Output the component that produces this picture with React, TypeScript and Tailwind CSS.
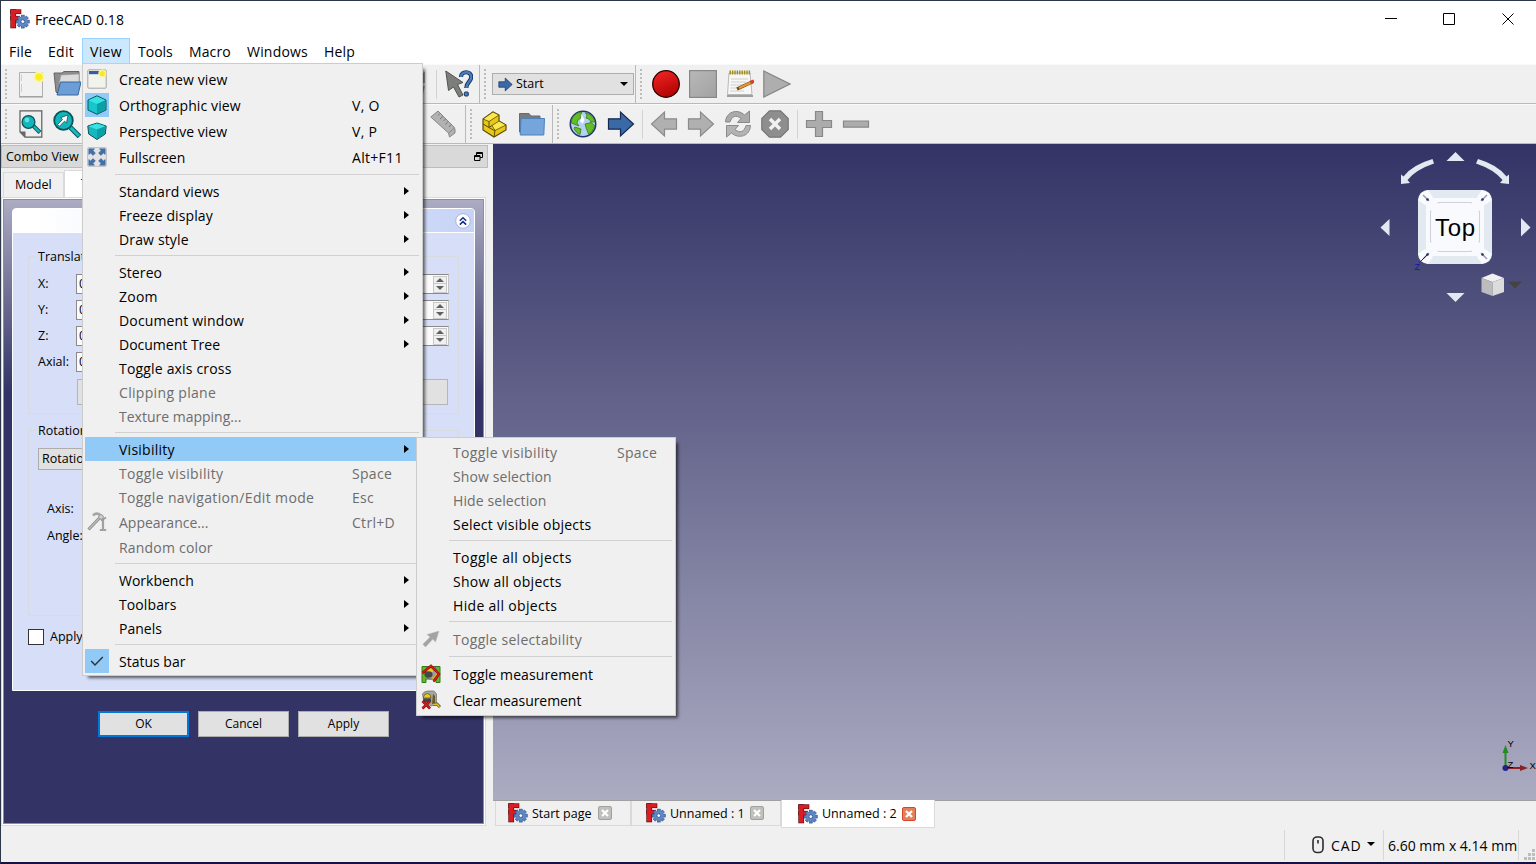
import React from "react";

type P = { className?: string; children?: React.ReactNode };

const ICON = "block shrink-0";

function Svg({ className = "", box = "0 0 28 28", children }: P & { box?: string }) {
  return (
    <svg viewBox={box} className={`${ICON} ${className}`} fill="none">
      {children}
    </svg>
  );
}

function Gear({ cx, cy, s }: { cx: number; cy: number; s: number }) {
  return (
    <g transform={`translate(${cx} ${cy}) scale(${s})`}>
      {[0, 45, 90, 135].map((a) => (
        <rect key={a} x="-1.5" y="-6.6" width="3" height="13.2" fill="#5680c0" stroke="#2c4c84" strokeWidth=".6" transform={`rotate(${a})`} />
      ))}
      <circle r="4.7" fill="#5f88c6" />
      <circle r="1.9" fill="#fff" stroke="#2c4c84" strokeWidth=".8" />
    </g>
  );
}

function Logo({ className = "" }: P) {
  return (
    <Svg box="0 0 20 20" className={`h-5 w-5 ${className}`}>
      <g stroke="#6d0c0f" strokeWidth="1.4">
        <rect x="1" y="1" width="4.4" height="17.6" />
        <rect x="1" y="1" width="9.6" height="3.4" />
        <rect x="1" y="7.6" width="8" height="3.2" />
      </g>
      <g fill="#d81d24">
        <rect x="1" y="1" width="4.4" height="17.6" />
        <rect x="1" y="1" width="9.6" height="3.4" />
        <rect x="1" y="7.6" width="8" height="3.2" />
      </g>
      <Gear cx={12.8} cy={12.6} s={0.98} />
    </Svg>
  );
}

function Handle({ className = "" }: P) {
  return (
    <div className={`flex h-[31px] w-[3px] shrink-0 flex-col justify-between ${className}`}>
      {Array.from({ length: 8 }, (_, i) => (
        <i key={i} className="block h-[2px] w-[2px] bg-[#bdbdbd]" />
      ))}
    </div>
  );
}

const Edge = ({ className = "" }: P) => <div className={`h-full w-px shrink-0 bg-[#b9b9b9] ${className}`} />;
const Split = ({ className = "" }: P) => <div className={`h-[29px] w-px shrink-0 bg-[#d2d2d2] ${className}`} />;

const BigArrow = ({ className = "h-7 w-7", left = false, fill = "#3a69a8", stroke = "#14294b" }: P & { left?: boolean; fill?: string; stroke?: string }) => (
  <Svg className={className}>
    <path transform={left ? "matrix(-1 0 0 1 28 0)" : undefined} d="M1.5 8.8H13.5V2L26.5 14L13.5 26V19.2H1.5Z" fill={fill} stroke={stroke} strokeWidth="1.2" />
  </Svg>
);

function Cube({ flat = false }: { flat?: boolean }) {
  return flat ? (
    <Svg box="0 0 20 20" className="h-5 w-5">
      <path d="M.8 5L10 2L19.2 5L18.3 13L10 18.5L1.7 13Z" fill="#16b8bd" stroke="#0b5558" />
      <path d="M1.3 5.2L10 2.4L18.7 5.2L10 8.5Z" fill="#35e2e4" />
      <path d="M10 8.5L18.7 5.2L17.9 12.8L10 18Z" fill="#0c9fa6" />
    </Svg>
  ) : (
    <Svg box="0 0 20 20" className="h-5 w-5">
      <path d="M1 5L10 .8L19 5V15L10 19.3L1 15Z" fill="#18c5ca" stroke="#0b5558" />
      <path d="M1.6 5.3L10 1.4L18.4 5.3L10 9Z" fill="#35e2e4" />
      <path d="M10 9L18.4 5.3V14.7L10 18.6Z" fill="#0c9fa6" />
    </Svg>
  );
}

const NewView = () => (
  <Svg box="0 0 20 20" className="h-5 w-5">
    <rect x=".8" y=".8" width="18.4" height="18.4" rx="1" fill="#f3f3ee" stroke="#a5a5a0" />
    <rect x="2" y="2" width="14" height="3.2" fill="#315f9f" />
    <circle cx="15.3" cy="4.5" r="4" fill="#f8f2a5" />
    <circle cx="15.3" cy="4.5" r="2.6" fill="#f8ea1d" />
  </Svg>
);

const FullIcon = () => (
  <Svg box="0 0 20 20" className="h-5 w-5">
    <rect x=".5" y=".5" width="19" height="19" rx="1.5" fill="#e3e3e3" stroke="#c4c4c4" />
    {[0, 90, 180, 270].map((a) => (
      <path key={a} transform={`rotate(${a} 10 10)`} d="M1.8 1.8H7.5L5.9 3.6L8.4 6L6 8.4L3.6 5.9L1.8 7.5Z" fill="#4272ae" stroke="#335a8e" strokeWidth=".5" />
    ))}
  </Svg>
);

const Hammer = () => (
  <Svg box="0 0 20 20" className="h-5 w-5">
    <path d="M1.5 17.5L13 5.5" stroke="#8e8e8e" strokeWidth="3.2" />
    <path d="M2 17L13 5.5" stroke="#bababa" strokeWidth="1.4" />
    <path d="M6 3.5Q9 .5 12.5 2.5L16 5.5" stroke="#a6a6a6" strokeWidth="2.6" />
    <path d="M16 7V17" stroke="#a2a2a2" strokeWidth="2.2" />
    <path d="M12.8 18H19.2" stroke="#999" strokeWidth="1.8" />
    <path d="M14 8.5L19 5.5" stroke="#999" strokeWidth="1.6" />
    <circle cx="14" cy="5" r="2.3" fill="#d0d0d0" stroke="#999" />
  </Svg>
);

const SelectIcon = () => (
  <Svg box="0 0 20 20" className="h-5 w-5">
    <path d="M18 2L14.6 13L11.8 10.3L4.5 18L1.8 15.2L9 8L6 5.5Z" fill="#a3a3a3" stroke="#bcbcbc" strokeWidth=".5" />
  </Svg>
);

const ToggleMeasure = () => (
  <Svg box="0 0 20 20" className="h-5 w-5">
    <path d="M1 18.500V2.500H19V18.500H15V15H5V18.500Z" fill="#65b62e" stroke="#357a18" />
    <path d="M6 3L14 3L16 6V15L8 15L4 11Z" fill="#9c9c98" stroke="#5f5f5f" strokeWidth=".8" />
    <path d="M6 6Q9 2.500 12 6V8H6Z" fill="#e8cb22" />
    <ellipse cx="7.500" cy="10.500" rx="4" ry="3.300" fill="#454846" />
    <path d="M15 7V12L11 15" stroke="#d0b32a" strokeWidth="2" />
    <path d="M1.500 9L10 1.800L18 10L12.500 17.500" stroke="#6c0808" strokeWidth="2.4" />
    <path d="M1.500 9L10 1.800L18 10L12.500 17.500" stroke="#e11b1b" strokeWidth="1.5" />
  </Svg>
);

const ClearMeasure = () => (
  <Svg box="0 0 20 20" className="h-5 w-5">
    <path d="M1.500 4Q3 1 7 1H13L15.500 4V14L10 16L3 12Z" fill="#a5a5a2" stroke="#777" strokeWidth=".8" />
    <path d="M12 4L14 6V13L11 14Z" fill="#6b5a1c" />
    <path d="M2.500 7Q3 3.500 6.500 3.500Q10 3.800 10 8H2.500Z" fill="#e8cb22" stroke="#544e10" strokeWidth=".7" />
    <path d="M2 8.500H10V12H3Z" fill="#454846" />
    <path d="M12 14.500L16 14L19 17" stroke="#55501a" strokeWidth="3" />
    <path d="M12 14.500L16 14L18.500 16.700" stroke="#dcc12c" strokeWidth="1.6" />
    <path d="M1.500 11L9 18.500M9 11L1.500 18.500" stroke="#7d0808" strokeWidth="2.600" />
    <path d="M1.500 11L9 18.500M9 11L1.500 18.500" stroke="#dd1717" strokeWidth="1.700" />
  </Svg>
);

const Check = () => (
  <Svg box="0 0 20 20" className="h-5 w-5">
    <path d="M4.2 10L8 14L15.8 6" stroke="#28323a" strokeWidth="1.4" />
  </Svg>
);

type Item = {
  t?: string;
  k?: string;
  sub?: boolean;
  off?: boolean;
  tall?: boolean;
  hot?: boolean;
  on?: boolean;
  icon?: React.ReactNode;
  tr?: string;
};

function Menu({ items, className, keyPos }: { items: Item[]; className: string; keyPos: string }) {
  return (
    <div className={`absolute border border-[#cccccc] bg-[#f0f0f0] px-[2px] py-[2px] shadow-[4px_4px_3px_-2px_rgba(0,0,0,0.6)] ${className}`}>
      {items.map((m, i) =>
        m.t ? (
          <div
            key={i}
            className={`relative flex items-center ${m.tall ? "h-[26px]" : "h-6"} ${m.hot ? "bg-[#91c9f7]" : ""} ${m.off ? "text-[#6d6d6d]" : "text-black"}`}
          >
            <div className={`flex h-6 w-6 shrink-0 items-center justify-center ${m.on ? "bg-[#91c9f7]" : ""}`}>{m.icon}</div>
            <span className={`ml-[10px] pt-px whitespace-nowrap ${m.tr ?? "tracking-[0.1px]"}`}>{m.t}</span>
            {m.k && <span className={`absolute top-1/2 -translate-y-1/2 pt-px tracking-[0.3px] whitespace-nowrap ${keyPos}`}>{m.k}</span>}
            {m.sub && (
              <svg viewBox="0 0 5 8" className="mr-[11px] mb-px ml-auto h-2 w-[5px]">
                <path d="M0 0L5 4L0 8Z" fill="#000" />
              </svg>
            )}
          </div>
        ) : (
          <div key={i} className="flex h-[9px] items-center">
            <div className="mr-px ml-[30px] h-px grow bg-[#d0d0d0]" />
          </div>
        ),
      )}
    </div>
  );
}

const viewItems: Item[] = [
  { t: "Create new view", tall: true, icon: <NewView /> },
  { t: "Orthographic view", k: "V, O", tall: true, on: true, icon: <Cube /> },
  { t: "Perspective view", k: "V, P", tall: true, icon: <Cube flat />, tr: "tracking-normal" },
  { t: "Fullscreen", k: "Alt+F11", tall: true, icon: <FullIcon />, tr: "tracking-normal" },
  {},
  { t: "Standard views", sub: true },
  { t: "Freeze display", sub: true },
  { t: "Draw style", sub: true, tr: "tracking-[0.15px]" },
  {},
  { t: "Stereo", sub: true },
  { t: "Zoom", sub: true, tr: "tracking-[0.25px]" },
  { t: "Document window", sub: true, tr: "tracking-[0.15px]" },
  { t: "Document Tree", sub: true, tr: "tracking-normal" },
  { t: "Toggle axis cross", tr: "tracking-[0.18px]" },
  { t: "Clipping plane", off: true, tr: "tracking-[0.32px]" },
  { t: "Texture mapping...", off: true, tr: "tracking-normal" },
  {},
  { t: "Visibility", sub: true, hot: true, tr: "tracking-[0.25px]" },
  { t: "Toggle visibility", k: "Space", off: true, tr: "tracking-[0.36px]" },
  { t: "Toggle navigation/Edit mode", k: "Esc", off: true, tr: "tracking-[0.36px]" },
  { t: "Appearance...", k: "Ctrl+D", off: true, tall: true, icon: <Hammer />, tr: "tracking-normal" },
  { t: "Random color", off: true, tr: "tracking-[0.2px]" },
  {},
  { t: "Workbench", sub: true, tr: "tracking-normal" },
  { t: "Toolbars", sub: true },
  { t: "Panels", sub: true, tr: "tracking-normal" },
  {},
  { t: "Status bar", on: true, icon: <Check />, tr: "tracking-normal" },
];

const visibilityItems: Item[] = [
  { t: "Toggle visibility", k: "Space", off: true, tr: "tracking-[0.36px]" },
  { t: "Show selection", off: true },
  { t: "Hide selection", off: true },
  { t: "Select visible objects", tr: "tracking-[0.23px]" },
  {},
  { t: "Toggle all objects", tr: "tracking-[0.4px]" },
  { t: "Show all objects", tr: "tracking-[0.27px]" },
  { t: "Hide all objects", tr: "tracking-[0.32px]" },
  {},
  { t: "Toggle selectability", off: true, tall: true, icon: <SelectIcon />, tr: "tracking-[0.3px]" },
  {},
  { t: "Toggle measurement", tall: true, icon: <ToggleMeasure /> },
  { t: "Clear measurement", tall: true, icon: <ClearMeasure />, tr: "tracking-[-0.05px]" },
];

function FileToolbar() {
  return (
    <div className="flex h-10 items-center border-t border-b border-t-[#fafafa] border-b-[#b9b9b9]">
      <Handle className="ml-[4px]" />
      <Svg className="ml-[9px] h-7 w-7">
        <path d="M2.5 2.500H25.500V26.500H2.500Z" fill="#f1f1f1" stroke="#b0b0b0" />
        <path d="M2 27H26" stroke="#999" />
        <path d="M4.500 4.500V11M4.500 14V22" stroke="#ccc" />
        <circle cx="22" cy="7" r="5.700" fill="#faf6b0" />
        <circle cx="22" cy="7" r="3.800" fill="#faee22" />
      </Svg>
      <Svg className="ml-[8px] h-7 w-7">
        <path d="M1 3H9L11 1.5H26V14L6 25L3 22Z" fill="#8d8d8d" stroke="#666" />
        <path d="M6 14L8 5L26 4V14Z" fill="#dcdcdc" stroke="#999" strokeWidth=".6" />
        <path d="M7.500 12H28L25 25H4Z" fill="#6b9dd6" stroke="#38669f" />
      </Svg>
      <div className="ml-[339px] flex h-7 w-[8px] items-center">
        <Svg box="0 0 8 28" className="h-7 w-2">
          <path d="M0 4L5 2V13H0M0 16H5L3 24L0 26" fill="#a2a2a2" />
        </Svg>
      </div>
      <Split className="ml-[8px]" />
      <Svg className="ml-[8px] h-7 w-7">
        <path d="M.8 1L18 12.500L12.500 14.500L18 25L14 27L8.500 17L3.500 20.500Z" fill="#7b7e7a" stroke="#50544f" />
        <path d="M16 7C16 .8 26.200 .5 26.200 7C26.200 12 21.500 11.500 21.300 18" stroke="#17345e" strokeWidth="4.2" />
        <path d="M16 7C16 .8 26.200 .5 26.200 7C26.200 12 21.500 11.500 21.300 18" stroke="#477cbf" strokeWidth="2.4" />
        <rect x="19.300" y="22" width="4" height="4" rx="1" fill="#477cbf" stroke="#17345e" />
      </Svg>
      <Edge className="ml-[6px]" />
      <Handle className="ml-[4px]" />
      <div className="ml-[5px] flex h-[22px] w-[142px] shrink-0 items-center border border-[#adadad] bg-[#e1e1e1] text-[12.5px]">
        <BigArrow className="ml-[5px] h-[15px] w-[15px]" />
        <span className="ml-[3px]">Start</span>
        <svg viewBox="0 0 8 4" className="mr-[5px] ml-auto h-1 w-2">
          <path d="M0 0H8L4 4Z" fill="#000" />
        </svg>
      </div>
      <Edge className="ml-px" />
      <Handle className="ml-[4px]" />
      <Svg className="ml-[9px] h-7 w-7">
        <circle cx="14" cy="14" r="13.3" fill="url(#rec)" stroke="#260000" strokeWidth="1.3" />
        <defs>
          <linearGradient id="rec" x1="0" y1="0" x2=".4" y2="1">
            <stop stopColor="#f52727" />
            <stop offset="1" stopColor="#b50404" />
          </linearGradient>
          <linearGradient id="gr" x1="0" y1="0" x2="1" y2="1">
            <stop stopColor="#b8b8b8" />
            <stop offset="1" stopColor="#a2a2a2" />
          </linearGradient>
        </defs>
      </Svg>
      <Svg className="ml-[9px] h-7 w-7">
        <rect x=".6" y=".6" width="26.8" height="26.8" fill="url(#gr)" stroke="#888" strokeWidth="1.2" />
      </Svg>
      <Svg className="ml-[9px] h-7 w-7">
        <path d="M3 3H24L26 24.5H1.5Z" fill="#f7f7f7" stroke="#aaa" strokeWidth=".8" />
        <path d="M1 26H27" stroke="#8b8b8b" strokeWidth="1.6" />
        <path d="M5 9H22M5 12H20M4.5 15H17M4.5 18H12M4 21H18" stroke="#cfcfcf" />
        <path d="M3.5 2.5H24.5" stroke="#9d8a16" strokeWidth="4" strokeDasharray="1.4 1" />
        <path d="M11 19L26 12" stroke="#7a4b10" strokeWidth="3.4" />
        <path d="M13 18L25 12.500" stroke="#e39a37" strokeWidth="2.2" />
        <path d="M24.500 12.700L28 11" stroke="#e23a2b" strokeWidth="3.6" />
      </Svg>
      <Svg className="ml-[9px] h-7 w-7">
        <path d="M.8 1L27 14L.8 27Z" fill="#aeaeae" stroke="#858585" strokeWidth="1.2" />
      </Svg>
    </div>
  );
}

function NavToolbar() {
  return (
    <div className="flex h-10 items-center border-t border-b border-t-[#fafafa] border-b-[#b9b9b9]">
      <Handle className="ml-[4px]" />
      <Svg className="ml-[9px] h-7 w-7">
        <path d="M3 .8H24.8V27.2H8L3 22Z" fill="#eee" stroke="#5a5f5a" strokeWidth="1.2" />
        <path d="M3 21.5H8.5V27.5Z" fill="#666" />
        <path d="M16.500 16L23 22.500" stroke="#0b5557" strokeWidth="4" />
        <path d="M16.500 16L22.500 22" stroke="#18bcc0" strokeWidth="2.2" />
        <circle cx="11.500" cy="12" r="6.4" fill="#12b5ba" stroke="#0a5357" strokeWidth="1.3" />
        <circle cx="10" cy="10" r="2.4" fill="#5be2e4" />
      </Svg>
      <Svg className="ml-[8px] h-7 w-7">
        <path d="M17 17L26.500 26.500" stroke="#0b5557" strokeWidth="5" />
        <path d="M17 17L26 26" stroke="#18bcc0" strokeWidth="3" />
        <circle cx="10.500" cy="10.500" r="9.300" fill="#12b5ba" stroke="#0a5357" strokeWidth="1.800" />
        <path d="M4.500 14.500L9.500 9.500L7.700 7.700L15 5L13.500 13L11.500 11.200L6.500 16.200Z" fill="#fff" stroke="#234" strokeWidth=".7" />
      </Svg>
      <Svg className="ml-[349px] h-7 w-7">
        <path d="M.8 7L8 1L24 17Q25.500 19 25 23L19.500 27L18.500 23Z" fill="#b2b2b2" stroke="#888" />
        <path d="M18.500 23L24.500 18" stroke="#888" />
        <path d="M10 3.500L8 5.500M13 6.500L10 9M15.500 9L13.500 11M18 11.500L15.500 14.500M21 14.500L19 17" stroke="#777" />
      </Svg>
      <Edge className="ml-[7px]" />
      <Handle className="ml-[4px]" />
      <Svg className="ml-[8px] h-7 w-7">
        <path d="M2 9L12 2L18 5V11L25 15V20L13 27L2 20Z" fill="#e9c717" stroke="#5b4c05" strokeWidth="1.2" />
        <path d="M2 9L12 2L18 5L8 11.5ZM11 15.5L18 11L25 15L14 20.5Z" fill="#fbe851" stroke="#5b4c05" strokeWidth=".8" />
        <path d="M8 11.5V17.5M2 14L8 17.5L11 15.5M14 20.5L13 27M8 17.5L14 21" stroke="#5b4c05" />
      </Svg>
      <Svg className="ml-[9px] h-7 w-7">
        <path d="M1.5 22V3.500H11L13 6H22V22Z" fill="#7b7b7b" stroke="#6a6a6a" />
        <path d="M3 8.500H26.500L25.800 25H2.200Z" fill="#76a5dc" stroke="#4d80bd" />
      </Svg>
      <Edge className="ml-[6px]" />
      <Handle className="ml-[4px]" />
      <Svg className="ml-[9px] h-7 w-7">
        <circle cx="14" cy="14" r="12.7" fill="#b5d0f0" stroke="#1f356b" strokeWidth="1.6" />
        <path d="M2.500 10C4.500 4.500 9 2 13 2.400L11 5.500L12 8L9 10L8 13L10 16L6 14.500L2.300 13Z" fill="#62be22" stroke="#2c7412" strokeWidth=".7" />
        <path d="M16 2.800C22 4 25 8 26 12L22 12L20 9L17 8L18 5ZM16 14L22 12.500L25.600 15.500C25 20 22 23 19.500 24L17.500 19ZM6 17L12 19L11 24.500C8 23.500 6 21 5 18Z" fill="#62be22" stroke="#2c7412" strokeWidth=".7" />
        <path d="M13 5L15.500 10L13.500 14L11 11Z" fill="#fff" />
      </Svg>
      <BigArrow className="ml-[10px] h-7 w-7" />
      <Split className="ml-[7px]" />
      <BigArrow className="ml-[7px] h-7 w-7" left fill="#b0b0b0" stroke="#8b8b8b" />
      <BigArrow className="ml-[9px] h-7 w-7" fill="#b0b0b0" stroke="#8b8b8b" />
      <Svg className="ml-[9px] h-7 w-7">
        <path d="M1.5 12C2 2 13-2 20.5 5L25.5 1V12.5H13.5L17 8.5C12 4.5 8 6 6 12Z" fill="#aaa" stroke="#888" />
        <path d="M26.5 15.5C26 26 15 29.5 7.5 23L2.5 27V15.5H14.5L11 19.5C16 23.5 20 22 22 15.5Z" fill="#b3b3b3" stroke="#8b8b8b" />
      </Svg>
      <Svg className="ml-[9px] h-7 w-7">
        <path d="M8.5.8H19.5L27.2 8.5V19.5L19.5 27.2H8.5L.8 19.5V8.5Z" fill="#8e8e8e" stroke="#777" strokeWidth="1.2" />
        <path d="M9 9L19 19M19 9L9 19" stroke="#f2f2f2" strokeWidth="3.4" />
      </Svg>
      <Split className="ml-[8px]" />
      <Svg className="ml-[7px] h-7 w-7">
        <path d="M10.5 1.5H17.5V10.5H26.5V17.5H17.5V26.5H10.5V17.5H1.5V10.5H10.5Z" fill="#acacac" stroke="#888" strokeWidth="1.2" />
      </Svg>
      <Svg className="ml-[9px] h-7 w-7">
        <path d="M1.5 11H26.5V17.2H1.5Z" fill="#acacac" stroke="#888" strokeWidth="1.2" />
      </Svg>
    </div>
  );
}

function Field({ label, spin = true }: { label: string; spin?: boolean }) {
  return (
    <div className="mb-[6px] flex h-5 items-center">
      <span className="w-[38px] shrink-0 whitespace-nowrap">{label}</span>
      <div className={`flex h-5 items-center justify-between border border-[#8a8a8a] border-r-[#c4c4c4] bg-[#fbfbfb] pl-[2px] ${spin ? "w-[373px]" : "w-[330px]"}`}>
        <span>0</span>
        {spin && (
          <div className="mr-px flex h-[17px] w-[14px] flex-col border border-[#c9c9c9] bg-[#f0f0f0]">
            <div className="flex h-1/2 items-center justify-center border-b border-[#c9c9c9]">
              <svg viewBox="0 0 8 4" className="h-1 w-2"><path d="M0 4H8L4 0Z" fill="#606060" /></svg>
            </div>
            <div className="flex h-1/2 items-center justify-center">
              <svg viewBox="0 0 8 4" className="h-1 w-2"><path d="M0 0H8L4 4Z" fill="#606060" /></svg>
            </div>
          </div>
        )}
      </div>
    </div>
  );
}

function ComboView() {
  return (
    <div className="flex h-[683px] w-[487px] shrink-0 flex-col pt-px text-[12.5px]">
      <div className="flex h-[23px] items-center justify-between border border-[#bcbcbc] bg-[#d9d9d9] pr-1 pl-[4px]">
        <span className="pt-[2px]">Combo View</span>
        <svg viewBox="0 0 9 9" className="h-[9px] w-[9px]" fill="none" stroke="#000">
          <path d="M2.5 3V.5H8.500V5.500H6M2.500 1.500H8.500M.5 3.500H6V8.500H.5ZM.5 4.500H6" />
        </svg>
      </div>
      <div className="flex h-[29px] items-end pl-[2px]">
        <div className="flex h-[25px] w-[61px] items-center border border-b-0 border-[#d9d9d9] bg-[#f0f0f0] pt-px pl-[11px]">Model</div>
        <div className="flex h-[27px] w-[60px] items-center border border-b-0 border-[#d9d9d9] bg-white pl-[16px]">Tasks</div>
      </div>
      <div className="h-[629px] w-[485px] border border-[#dadada] bg-white p-px">
        <div className="flex h-full w-[481px] flex-col items-center border border-[#8d8da0] bg-[linear-gradient(#ababc2_0px,#333366_192px)] pt-[8px]">
          <div className="h-[483px] w-[463px] shrink-0 overflow-hidden rounded-t-[4px] border border-white bg-[#d6dff7]">
            <div className="flex h-[24px] items-center justify-end border-b border-white bg-[linear-gradient(90deg,#ffffff_0%,#ffffff_5%,#c6d3f7_100%)] pr-[3px]">
              <svg viewBox="0 0 16 16" className="h-4 w-4" fill="none">
                <circle cx="8" cy="8" r="7.3" fill="#fff" stroke="#a9b4d4" />
                <path d="M4.800 7.800L8 4.800L11.200 7.800M4.800 11.600L8 8.600L11.200 11.600" stroke="#0b2f88" strokeWidth="1.5" />
              </svg>
            </div>
            <div className="px-[15px] pt-[15px]">
              <fieldset className="h-[166px] border border-[#d8dbdf] px-[9px]">
                <legend className="-ml-[2px] h-[17px] px-[2px] leading-[17px]">Translation:</legend>
                <div className="pt-[9px]">
                  <Field label="X:" />
                  <Field label="Y:" />
                  <Field label="Z:" />
                  <Field label="Axial:" spin={false} />
                  <div className="mt-[7px] ml-[39px] h-[26px] w-[371px] border border-[#b5b5b5] bg-[#e1e1e1]" />
                </div>
              </fieldset>
              <fieldset className="mt-[8px] h-[194px] border border-[#d8dbdf] px-[9px]">
                <legend className="-ml-[2px] h-[17px] px-[2px] leading-[17px]">Rotation:</legend>
                <div className="mt-[9px] flex h-[22px] w-[410px] items-center border border-[#adadad] bg-[#e1e1e1] pl-[3px]">Rotation</div>
                <div className="mt-[29px] ml-[9px] h-[20px] leading-[20px]">Axis:</div>
                <div className="mt-[7px] ml-[9px] h-[20px] leading-[20px]">Angle:</div>
              </fieldset>
              <div className="mt-[13px] flex items-center">
                <div className="h-4 w-4 border border-[#333] bg-white" />
                <span className="ml-[6px] leading-4">Apply</span>
              </div>
            </div>
          </div>
          <div className="mt-[20px] flex gap-[9px] text-[12px]">
            <button className="h-[26px] w-[91px] border-2 border-[#0078d7] bg-[#e1e1e1]">OK</button>
            <button className="h-[26px] w-[91px] border border-[#adadad] bg-[#e1e1e1]">Cancel</button>
            <button className="h-[26px] w-[91px] border border-[#adadad] bg-[#e1e1e1]">Apply</button>
          </div>
        </div>
      </div>
    </div>
  );
}

function Corner({ t }: { t: string }) {
  return (
    <g transform={t}>
      <path d="M-37 -27L-34 -34L-27 -37L-22 -30L-30 -22Z" fill="#fafbfd" />
      <path d="M-32 -32L-26 -26" stroke="#9da0b8" strokeWidth="1.6" />
      <circle cx="-27.500" cy="-27.500" r="1.3" fill="#303070" />
    </g>
  );
}

function Viewport() {
  return (
    <div className="flex h-[657px] shrink-0 flex-col items-end justify-between border-b border-[#a0a0a0] bg-[linear-gradient(#333366,#ababc2)]">
      <svg viewBox="1370 144 166 166" className="h-[166px] w-[166px] shrink-0" fill="none">
        <g fill="#e2e9f0">
          <path d="M1446.500 161L1455.500 152L1464.500 161Z" />
          <path d="M1446.500 293L1455.500 302L1464.500 293Z" />
          <path d="M1389.500 219V236L1380.500 227.500Z" />
          <path d="M1521 218V236.500L1530.500 227.500Z" />
          <path d="M1401 184V174.500L1403.500 176.500Q1412 165 1432.500 159L1434 163.500Q1416 169.500 1407.500 180L1410 183Z" />
          <path d="M1509 184V174.500L1506.500 176.500Q1498 165 1478 159L1476 163.500Q1494 169.500 1502.500 180L1500 183Z" />
        </g>
        <rect x="1418" y="190" width="74" height="74" rx="10" fill="#e2e9f0" />
        <rect x="1426" y="198" width="58" height="58" rx="5" fill="#f9fafd" />
        <Corner t="translate(1455 227)" />
        <Corner t="translate(1455 227) rotate(90)" />
        <Corner t="translate(1455 227) rotate(180)" />
        <Corner t="translate(1455 227) rotate(270)" />
        <path stroke="#cfd0dc" d="M1438 203.500V202.500H1471.500V203.500M1438 250.500V251.500H1471.500V250.500M1431.500 211H1430.500V242H1431.500M1478.500 211H1479.500V242H1478.500" />
        <path d="M1419 263L1428 254" stroke="#1a1ad0" />
        <text x="1435" y="236" fontSize="24" fontFamily="Liberation Sans, sans-serif" fill="#000" textLength="40">Top</text>
        <text x="1414.500" y="269.500" fontSize="9" fontFamily="Liberation Sans, sans-serif" fill="#1414b8">Z</text>
        <path d="M1481.500 278L1492.500 273.500L1504 278L1492.500 282Z" fill="#f1f1f1" />
        <path d="M1481.500 278L1492.500 282V296L1481.500 292Z" fill="#bcbcbc" />
        <path d="M1504 278L1492.500 282V296L1504 292Z" fill="#dcdcdc" />
        <path d="M1508 281.500H1522L1515 288.500Z" fill="#444" />
      </svg>
      <svg viewBox="1496 730 40 50" className="mb-5 h-[50px] w-10 shrink-0" fill="none">
        <path d="M1505.500 768V752" stroke="#228b22" strokeWidth="2" />
        <path d="M1502.500 753L1505.500 745L1508.500 753Z" fill="#228b22" />
        <path d="M1506 768H1521" stroke="#8b2222" strokeWidth="2" />
        <path d="M1520 765L1528 768L1520 771Z" fill="#8b2222" />
        <circle cx="1505.500" cy="768" r="3" fill="#22228b" />
        <g fontSize="9.500" fontFamily="Liberation Sans, sans-serif" fill="#000">
          <text x="1507.500" y="746.500">Y</text>
          <text x="1507.500" y="768">Z</text>
          <text x="1529.500" y="768.500">X</text>
        </g>
      </svg>
    </div>
  );
}

function DocTab({ label, on = false, className = "" }: { label: string; on?: boolean; className?: string }) {
  return (
    <div className={`flex shrink-0 items-center border border-t-0 border-[#d9d9d9] ${on ? "bg-white" : "bg-[#f0f0f0]"} ${className}`}>
      <Logo />
      <span className="ml-[4px] pt-[2px] whitespace-nowrap">{label}</span>
      <svg viewBox="0 0 14 14" className="ml-auto h-[14px] w-[14px]" fill="none">
        <rect x=".5" y=".5" width="13" height="13" rx="1.5" fill={on ? "#e2805a" : "#c0c0bd"} stroke={on ? "#d8432a" : "#a0a09d"} />
        <path d="M4 4L10 10M10 4L4 10" stroke="#fff" strokeWidth="2.2" />
      </svg>
    </div>
  );
}

export default function App() {
  return (
    <div className="relative flex h-[864px] w-[1536px] flex-col overflow-hidden border-t border-b-2 border-l border-[#2c3848] border-b-[#16123f] bg-[#f0f0f0] font-['Open_Sans','Noto_Sans',sans-serif] text-[14px] text-black">
      <header className="flex h-[37px] shrink-0 items-center bg-white pl-[9px]">
        <Logo className="mb-px" />
        <span className="mb-px ml-[5px] tracking-[0.1px]">FreeCAD 0.18</span>
        <svg viewBox="0 0 130 12" className="mr-[21px] mb-px ml-auto h-3 w-[130px]" fill="none" stroke="#000">
          <path d="M0 5.500H12M58.500 .5H69.500V11.500H58.500ZM117.500 .5L128.500 11.500M128.500 .5L117.500 11.500" />
        </svg>
      </header>
      <nav className="flex h-[26px] shrink-0 bg-white text-[14px]">
        {[
          ["File", "w-[39px] pl-[8px] tracking-[0.2px]"],
          ["Edit", "w-[42px] pl-[8px] tracking-[0.3px]"],
          ["View", "w-[48px] pl-[7px] border border-[#99d1ff] bg-[#cce8ff] tracking-[0.3px]"],
          ["Tools", "w-[51px] pl-[8px]"],
          ["Macro", "w-[58px] pl-[8px] tracking-[0.1px]"],
          ["Windows", "w-[77px] pl-[8px] tracking-[0.2px]"],
          ["Help", "w-[60px] pl-[8px] tracking-[0.2px]"],
        ].map(([t, c]) => (
          <div key={t} className={`flex h-[26px] shrink-0 items-center ${c}`}>{t}</div>
        ))}
      </nav>
      <FileToolbar />
      <NavToolbar />
      <main className="flex h-[683px] shrink-0">
        <ComboView />
        <section className="ml-[5px] flex grow flex-col">
          <Viewport />
          <div className="flex h-[26px] items-start pl-[2px] text-[12.5px]">
            <DocTab label="Start page" className="h-[25px] w-[136px] pr-[18px] pl-[12px]" />
            <DocTab label="Unnamed : 1" className="h-[25px] w-[150px] pr-[16px] pl-[14px]" />
            <DocTab label="Unnamed : 2" on className="-mt-px h-[28px] w-[154px] pr-[18px] pl-[16px]" />
          </div>
        </section>
      </main>
      <footer className="flex grow items-center justify-end">
        <div className="h-[30px] w-px bg-[#d7d7d7]" />
        <div className="flex w-[98px] items-center pl-[27px]">
          <svg viewBox="0 0 12 18" className="h-[18px] w-3 shrink-0" fill="none" stroke="#2d2d2d">
            <rect x="1" y="1" width="10" height="15.500" rx="4" strokeWidth="1.6" />
            <path d="M6 4V7.500" strokeWidth="1.6" />
          </svg>
          <span className="ml-[7px] pt-[2px] tracking-[0.9px]">CAD</span>
          <svg viewBox="0 0 8 4" className="mr-[8px] mb-px ml-auto h-1 w-2">
            <path d="M0 0H8L4 4Z" fill="#000" />
          </svg>
        </div>
        <div className="h-[30px] w-px bg-[#d7d7d7]" />
        <span className="ml-[4px] w-[130px] pt-[2px] whitespace-nowrap">6.60 mm x 4.14 mm</span>
        <div className="h-[30px] w-px bg-[#d7d7d7]" />
        <svg viewBox="0 0 16 12" className="mt-5 mr-px h-3 w-4" fill="#bdbdbd">
          <path d="M13 0h3v3h-3zM13 4h3v3h-3zM9 4h3v3H9zM13 8h3v3h-3zM9 8h3v3H9zM5 8h3v3H5z" />
        </svg>
      </footer>
      <Menu items={viewItems} className="top-[62px] left-[81px] h-[613px] w-[341px]" keyPos="left-[267px]" />
      <Menu items={visibilityItems} className="top-[436px] left-[415px] h-[279px] w-[260px]" keyPos="left-[198px]" />
    </div>
  );
}
